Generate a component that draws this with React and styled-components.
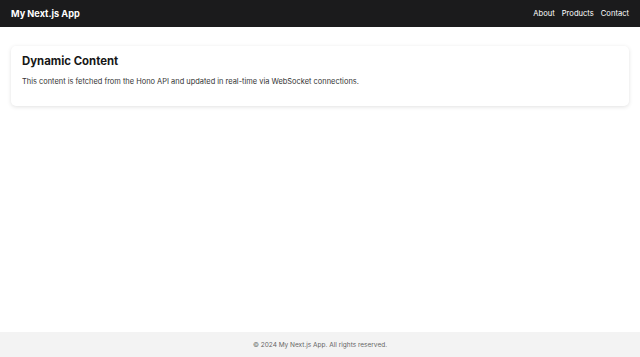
import React from "react";
import styled, { createGlobalStyle } from "styled-components";

const GlobalStyle = createGlobalStyle`
  * { box-sizing: border-box; }
  body {
    margin: 0;
    font-family: Inter, "Noto Sans", sans-serif;
    background: #ffffff;
    color: #171717;
  }
`;

const Page = styled.div`
  min-height: 100vh;
  display: flex;
  flex-direction: column;
`;

const Header = styled.header`
  height: 27px;
  background: #1b1b1c;
  color: #ffffff;
  display: flex;
  align-items: center;
  justify-content: space-between;
  padding: 0 11px;
`;

const Brand = styled.div`
  font-size: 9.2px;
  font-weight: 700;
`;

const Nav = styled.nav`
  display: flex;
  gap: 7px;
`;

const NavLink = styled.a`
  font-size: 7.6px;
  color: #ffffff;
  text-decoration: none;
`;

const Main = styled.main`
  flex: 1;
  padding: 19px 11px 11px;
`;

const Card = styled.section`
  background: #ffffff;
  border-radius: 5px;
  box-shadow: 0 1px 4px rgba(0, 0, 0, 0.12);
  padding: 8px 11px 20px;
`;

const CardTitle = styled.h2`
  margin: 0 0 9px;
  font-size: 11.4px;
  font-weight: 700;
`;

const CardText = styled.p`
  margin: 0;
  font-size: 7.45px;
  color: #333333;
`;

const Footer = styled.footer`
  height: 25px;
  background: #f3f3f3;
  display: flex;
  align-items: center;
  justify-content: center;
  font-size: 6.5px;
  color: #666666;
`;

export default function App() {
  return (
    <Page>
      <GlobalStyle />
      <Header>
        <Brand>My Next.js App</Brand>
        <Nav>
          <NavLink href="#">About</NavLink>
          <NavLink href="#">Products</NavLink>
          <NavLink href="#">Contact</NavLink>
        </Nav>
      </Header>
      <Main>
        <Card>
          <CardTitle>Dynamic Content</CardTitle>
          <CardText>
            This content is fetched from the Hono API and updated in real-time
            via WebSocket connections.
          </CardText>
        </Card>
      </Main>
      <Footer>© 2024 My Next.js App. All rights reserved.</Footer>
    </Page>
  );
}
